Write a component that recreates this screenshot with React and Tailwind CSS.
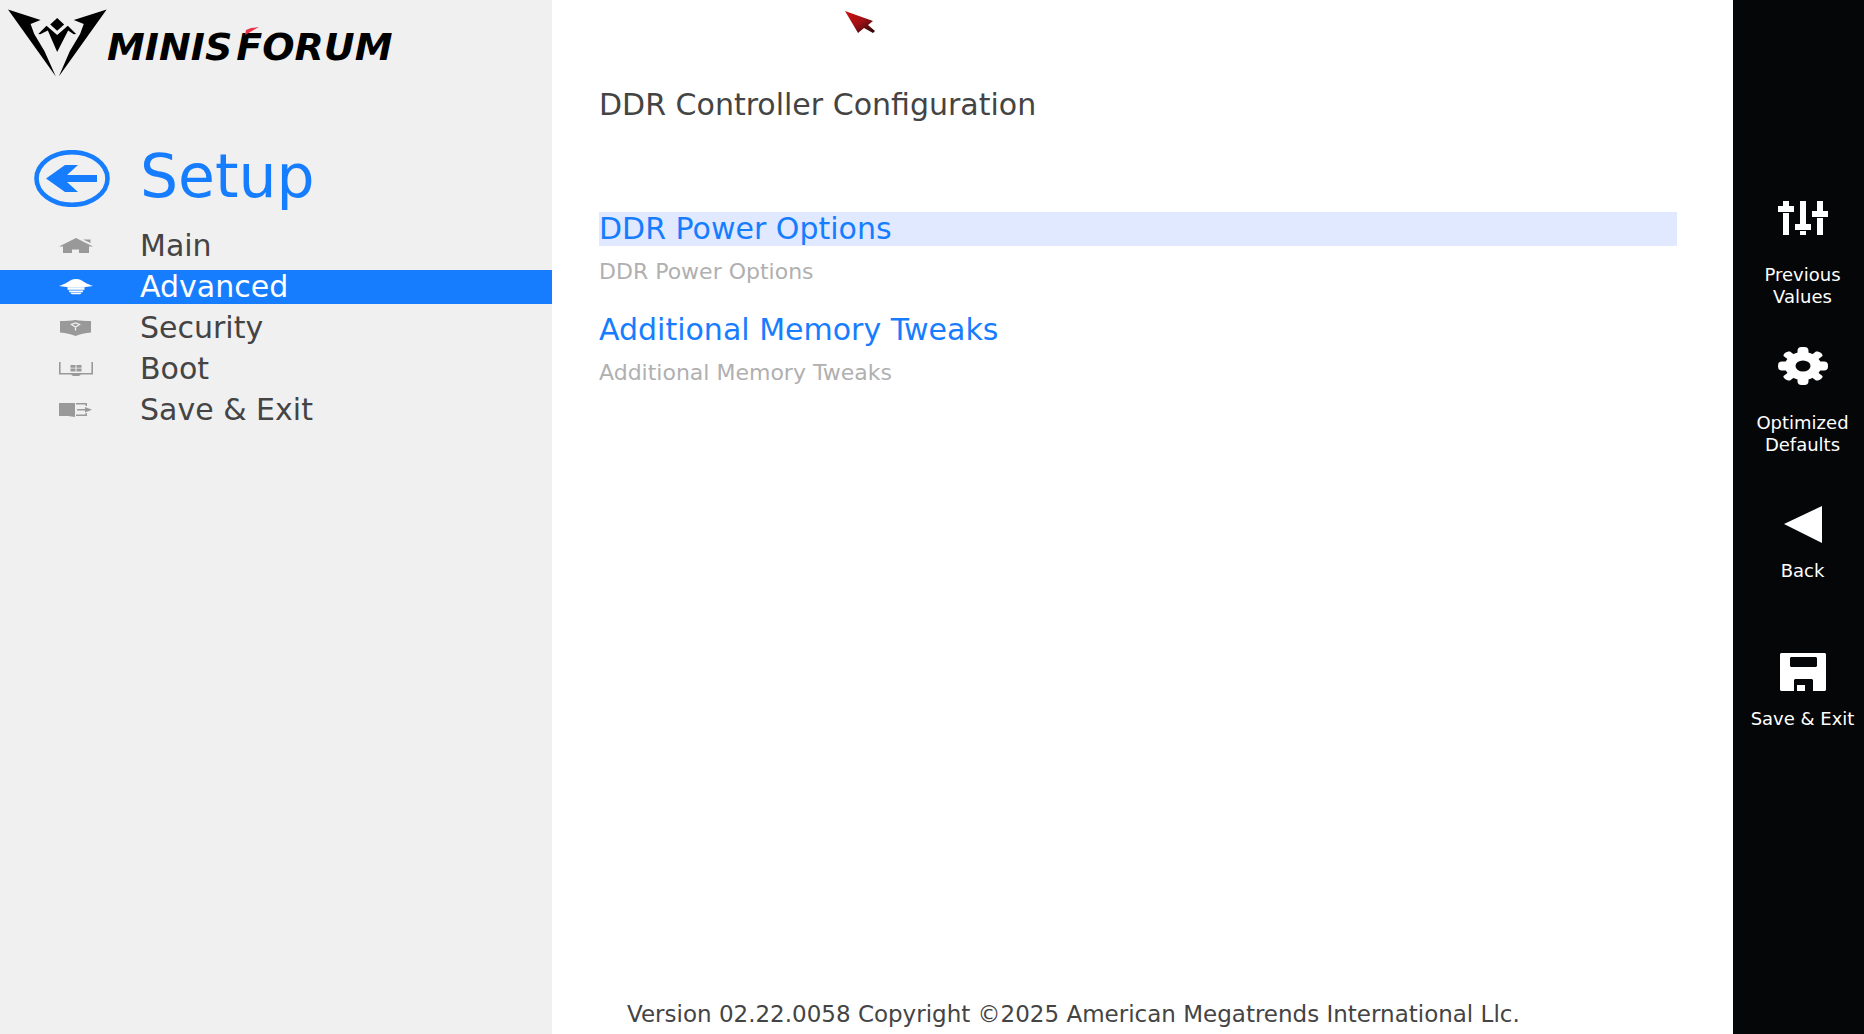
import React, { useState } from "react";

const HomeIcon = () => (
    <svg viewBox="0 0 34 16" className="w-[34px] h-4" fill="currentColor" aria-hidden="true">
        <path d="M17 0 0 8.500h4V15h9v-3.500h7V15h10V8.500h4L30 6.500 23 3z" />
        <path d="M24 1.500h7.500V5z" />
    </svg>
);

const CapIcon = () => (
    <svg viewBox="0 0 34 16" className="w-[34px] h-4" fill="currentColor" aria-hidden="true">
        <path d="M17 0c-4 .2-6 1.500-9 3.500C6 5 3 5.800 0 7l9 1.200h16L34 7c-3-1.200-6-2-8-3.500C23 1.500 21 .2 17 0z" />
        <path d="M8.500 8.200h17v2.600h-17zM9.500 11.400h15l-1 1.800h-13zM11 13.800h12l-2 1.500h-8z" />
    </svg>
);

const ShieldIcon = () => (
    <svg viewBox="0 0 34 16" className="w-[34px] h-4" fill="currentColor" aria-hidden="true">
        <path d="M1 1C7 1 12 .6 16.500 0 21 .6 26 1 32 1v11.500c-6 .6-11 1.500-15.500 3.500C12 14 7 13.100 1 12.500z" />
        <path d="M12.500 4.500 16.500 7l4-2.500-4-1.500zM16.500 7v3.500" fill="none" stroke="#f0f0f0" strokeWidth="1.300" />
    </svg>
);

const MonitorIcon = () => (
    <svg viewBox="0 0 34 16" className="w-[34px] h-4" fill="currentColor" aria-hidden="true">
        <path d="M0 1h1.600v11h30.800V1H34v12.500H22l-2 1.500h-6l-2-1.500H0z" />
        <path d="M11.500 4h5v2.800h-5zM17.500 4h5v2.800h-5zM11.500 7.600h5v2.800h-5zM17.500 7.600h5v2.800h-5z" />
    </svg>
);

const ExitIcon = () => (
    <svg viewBox="0 0 34 16" className="w-[34px] h-4" fill="currentColor" aria-hidden="true">
        <path d="M0 1h16v14l-7-1H0z" />
        <path d="M17 1h11v1.400H17zM17 12.600h11V14H17zM18 7h8V5l7 2.700-7 2.700v-2h-8z" />
        <path d="M26.500 1H28v3h-1.500zM26.500 11H28v3h-1.500z" />
    </svg>
);

const SlidersIcon = () => (
    <svg viewBox="0 0 50 34" className="w-[50px] h-[34px]" fill="currentColor" aria-hidden="true">
        <path d="M5 0h6v5H5zM0 5h16v6H0zM5 12h6v22H5zM22 0h6v23h-6zM17 23h16v6H17zM22 30h6v4h-6zM39 0h6v10h-6zM34 10h16v6H34zM39 17h6v17h-6z" />
    </svg>
);

const GearIcon = () => (
    <svg viewBox="0 0 50 38" className="w-[50px] h-[38px]" aria-hidden="true">
        <g fill="currentColor">
            <ellipse cx="25" cy="19" rx="18" ry="14" />
            <rect x="19.500" y="0" width="11" height="38" rx="4" />
            <rect x="0" y="14.500" width="50" height="9" rx="4" />
            <path d="M12 4.500 44.500 29c1 1.500-3 5-6.500 4.500L5.500 9C5 6.500 9 4 12 4.500z" />
            <path d="M38 4.500 5.500 29c-1 1.500 3 5 6.500 4.500L44.500 9c.5-2.500-3.500-5-6.500-4.500z" />
        </g>
        <ellipse cx="25" cy="19" rx="7.500" ry="5.500" fill="#050608" />
    </svg>
);

const BackIcon = () => (
    <svg viewBox="0 0 38 38" className="w-[38px] h-[38px]" fill="currentColor" aria-hidden="true">
        <path d="M38 1v37L0 19z" />
    </svg>
);

const SaveIcon = () => (
    <svg viewBox="0 0 46 38" className="w-[46px] h-[38px]" fill="currentColor" fillRule="evenodd" aria-hidden="true">
        <path d="M1 0h44l1 1v36l-1 1H33V27l-1-1H15l-1 1v11H1l-1-1V1zM11 4l-1 1v8l1 1h25l1-1V5l-1-1z" />
        <path d="M17 32h8v6h-8z" />
    </svg>
);

const menu = [
    { name: "Main", icon: HomeIcon },
    { name: "Advanced", icon: CapIcon },
    { name: "Security", icon: ShieldIcon },
    { name: "Boot", icon: MonitorIcon },
    { name: "Save & Exit", icon: ExitIcon },
];

const options = [
    { title: "DDR Power Options", help: "DDR Power Options" },
    { title: "Additional Memory Tweaks", help: "Additional Memory Tweaks" },
];

const actions = [
    { lines: ["Previous", "Values"], icon: SlidersIcon, iconBox: "h-12" },
    { lines: ["Optimized", "Defaults"], icon: GearIcon, iconBox: "h-12" },
    { lines: ["Back"], icon: BackIcon, iconBox: "h-[68px]" },
    { lines: ["Save & Exit"], icon: SaveIcon, iconBox: "h-[68px]" },
];

const Logo = () => (
    <div className="flex items-start pl-2 pt-[9px]">
        <svg viewBox="24 28 298 204" className="w-[99px] h-[68px] shrink-0" aria-hidden="true">
            <path d="M24 29 122 61 92 73 103 103 134 155 168 231zM321 29 222 61 252 73 241 103 210 155 177 231z" />
            <path d="M172 55 193 74 172 93 151 74zM115 103 140 78 172 106 204 78 229 103 222 104 205 92 172 157 144 92 121 104z" />
        </svg>
        <div className="relative flex gap-1 pt-4 text-[38px] leading-[44px] font-bold italic text-black">
            <span>MINIS</span>
            <span>FORUM</span>
            <svg viewBox="0 0 14 8" className="absolute left-[138px] top-[18px] w-[14px] h-2" aria-hidden="true">
                <path d="M0 8 1 3 6 1 14 0 7 4z" fill="#e8344a" />
            </svg>
        </div>
    </div>
);

const App = () => {
    const [active, setActive] = useState("Advanced");
    const [selected, setSelected] = useState(0);

    return (
        <div className="relative flex min-h-screen bg-white text-[#444] font-['DejaVu_Sans',sans-serif]">
            <aside className="w-[552px] shrink-0 bg-[#f0f0f0]">
                <Logo />
                <div className="flex items-center pl-[34px] mt-[67px] h-[68px] text-[#177dff]">
                    <button type="button" aria-label="Go back">
                        <svg viewBox="0 0 76 57" className="w-[76px] h-[57px]" aria-hidden="true">
                            <ellipse cx="38" cy="28.500" rx="35.500" ry="26.300" fill="none" stroke="currentColor" strokeWidth="4.600" />
                            <path d="M12 28.500 31 15h13L33 25h30v7H33l11 10H31z" fill="currentColor" />
                        </svg>
                    </button>
                    <h1 className="ml-[30px] text-[60px] leading-[64px] pb-1">Setup</h1>
                </div>
                <nav className="flex flex-col gap-[7px] mt-[17px]">
                    {menu.map(({ name, icon: Icon }) => (
                        <button
                            key={name}
                            type="button"
                            onClick={() => setActive(name)}
                            className={`flex items-center h-[34px] pl-[59px] gap-[47px] text-[30px] leading-[34px] ${active === name ? "bg-[#177dff] text-white" : ""}`}
                        >
                            <span className={active === name ? "text-white" : "text-[#999]"}>
                                <Icon />
                            </span>
                            {name}
                        </button>
                    ))}
                </nav>
            </aside>

            <main className="flex flex-col flex-1 pl-[47px] pr-14">
                <h2 className="mt-[88px] text-[30px] leading-[34px]">DDR Controller Configuration</h2>
                <div className="mt-[90px] flex flex-col gap-[30px]">
                    {options.map((option, index) => (
                        <div key={option.title}>
                            <a
                                href="#"
                                onClick={() => setSelected(index)}
                                className={`block text-[30px] leading-[34px] text-[#177dff] ${selected === index ? "bg-[#e0e9ff]" : ""}`}
                            >
                                {option.title}
                            </a>
                            <p className="mt-[15px] text-[22px] leading-[22px] text-[#b0b0b0]">{option.help}</p>
                        </div>
                    ))}
                </div>
                <footer className="mt-auto pl-7 pb-[7px] text-[23px] leading-[26px]">
                    Version 02.22.0058 Copyright ©2025 American Megatrends International Llc.
                </footer>
            </main>

            <aside className="w-[131px] shrink-0 pt-[194px] bg-[#050608] text-white">
                {actions.map(({ lines, icon: Icon, iconBox }) => (
                    <button
                        key={lines[0]}
                        type="button"
                        className="flex flex-col items-center w-full h-[148px] pl-2 text-[18px] leading-[22px]"
                    >
                        <span className={`flex items-center ${iconBox}`}>
                            <Icon />
                        </span>
                        <span className={lines.length > 1 ? "mt-[22px]" : "mt-0.5"}>
                            {lines.map((line) => (
                                <span key={line} className="block whitespace-nowrap">{line}</span>
                            ))}
                        </span>
                    </button>
                ))}
            </aside>

            {/* mouse pointer */}
            <svg viewBox="0 0 30 24" className="absolute left-[845px] top-[11px] w-[30px] h-6 pointer-events-none" aria-hidden="true">
                <defs>
                    <linearGradient id="pointer" x1="0" y1="0" x2="1" y2="1">
                        <stop offset="0" stopColor="#d01010" />
                        <stop offset="0.500" stopColor="#a01015" />
                        <stop offset="1" stopColor="#200508" />
                    </linearGradient>
                </defs>
                <path d="M0 0 28 10 23 14 30 20 28 22 19 17 13 22z" fill="url(#pointer)" />
            </svg>
        </div>
    );
};

export default App;
